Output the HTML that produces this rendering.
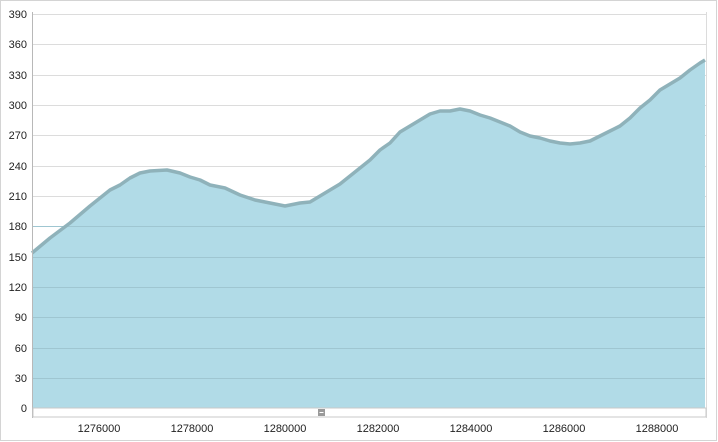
<!DOCTYPE html>
<html><head><style>
html,body{margin:0;padding:0;background:#fff;}
svg{display:block;font-family:"Liberation Sans",sans-serif;}
</style></head><body>
<svg width="718" height="442" viewBox="0 0 718 442" xmlns="http://www.w3.org/2000/svg">
<rect x="0.5" y="0.5" width="716" height="440" fill="#fff" stroke="#d4d4d4"/>
<g stroke="#dcdcdc" stroke-width="1">
<line x1="33" y1="14.5" x2="706" y2="14.5"/>
<line x1="33" y1="44.5" x2="706" y2="44.5"/>
<line x1="33" y1="75.5" x2="706" y2="75.5"/>
<line x1="33" y1="105.5" x2="706" y2="105.5"/>
<line x1="33" y1="135.5" x2="706" y2="135.5"/>
<line x1="33" y1="166.5" x2="706" y2="166.5"/>
<line x1="33" y1="196.5" x2="706" y2="196.5"/>
</g>
<path id="c" d="M32,253 L50,238 L70,223 L90,206 L100,198 L110,190 L120,185 L130,178 L140,173 L150,171 L167,170 L180,173 L190,177 L200,180 L210,185 L225,188 L240,195 L255,200 L270,203 L285,206 L300,203 L310,202 L320,196 L330,190 L340,184 L350,176 L360,168 L370,160 L380,150 L390,143 L400,132 L410,126 L420,120 L430,114 L440,111 L450,111 L460,109 L470,111 L480,115 L490,118 L500,122 L510,126 L520,132 L530,136 L540,138 L550,141 L560,143 L570,144 L580,143 L590,141 L600,136 L610,131 L620,126 L630,118 L640,108 L650,100 L660,90 L670,84 L680,78 L690,70 L700,63 L705,60 L705,408 L32,408 Z" fill="#b1dbe7"/>
<g stroke="#9fc6d1" stroke-width="1">
<line x1="33" y1="226.5" x2="705" y2="226.5"/>
<line x1="33" y1="257.5" x2="705" y2="257.5"/>
<line x1="33" y1="287.5" x2="705" y2="287.5"/>
<line x1="33" y1="317.5" x2="705" y2="317.5"/>
<line x1="33" y1="348.5" x2="705" y2="348.5"/>
<line x1="33" y1="378.5" x2="705" y2="378.5"/>
</g>
<path d="M32,253 L50,238 L70,223 L90,206 L100,198 L110,190 L120,185 L130,178 L140,173 L150,171 L167,170 L180,173 L190,177 L200,180 L210,185 L225,188 L240,195 L255,200 L270,203 L285,206 L300,203 L310,202 L320,196 L330,190 L340,184 L350,176 L360,168 L370,160 L380,150 L390,143 L400,132 L410,126 L420,120 L430,114 L440,111 L450,111 L460,109 L470,111 L480,115 L490,118 L500,122 L510,126 L520,132 L530,136 L540,138 L550,141 L560,143 L570,144 L580,143 L590,141 L600,136 L610,131 L620,126 L630,118 L640,108 L650,100 L660,90 L670,84 L680,78 L690,70 L700,63 L705,60" fill="none" stroke="#8fb2ba" stroke-width="3.5" stroke-linejoin="round"/>
<line x1="32.5" y1="12" x2="32.5" y2="418" stroke="#b8b8b8"/>
<line x1="706.5" y1="12" x2="706.5" y2="418" stroke="#dcdcdc"/>
<rect x="33" y="408" width="673" height="9" fill="#fff" stroke="#c8c8c8" stroke-width="1"/>
<rect x="318" y="409" width="7" height="7" fill="#9a9a9a"/>
<rect x="319.5" y="412" width="4" height="1" fill="#fff"/>
<g font-size="11" fill="#222" text-anchor="end">
<text x="27" y="18">390</text>
<text x="27" y="48">360</text>
<text x="27" y="79">330</text>
<text x="27" y="109">300</text>
<text x="27" y="139">270</text>
<text x="27" y="170">240</text>
<text x="27" y="200">210</text>
<text x="27" y="230">180</text>
<text x="27" y="261">150</text>
<text x="27" y="291">120</text>
<text x="27" y="321">90</text>
<text x="27" y="352">60</text>
<text x="27" y="382">30</text>
<text x="27" y="412">0</text>
</g>
<g font-size="11" fill="#222" text-anchor="middle">
<text x="99" y="432">1276000</text>
<text x="192" y="432">1278000</text>
<text x="285" y="432">1280000</text>
<text x="378" y="432">1282000</text>
<text x="471" y="432">1284000</text>
<text x="564" y="432">1286000</text>
<text x="657" y="432">1288000</text>
</g>
</svg>
</body></html>
